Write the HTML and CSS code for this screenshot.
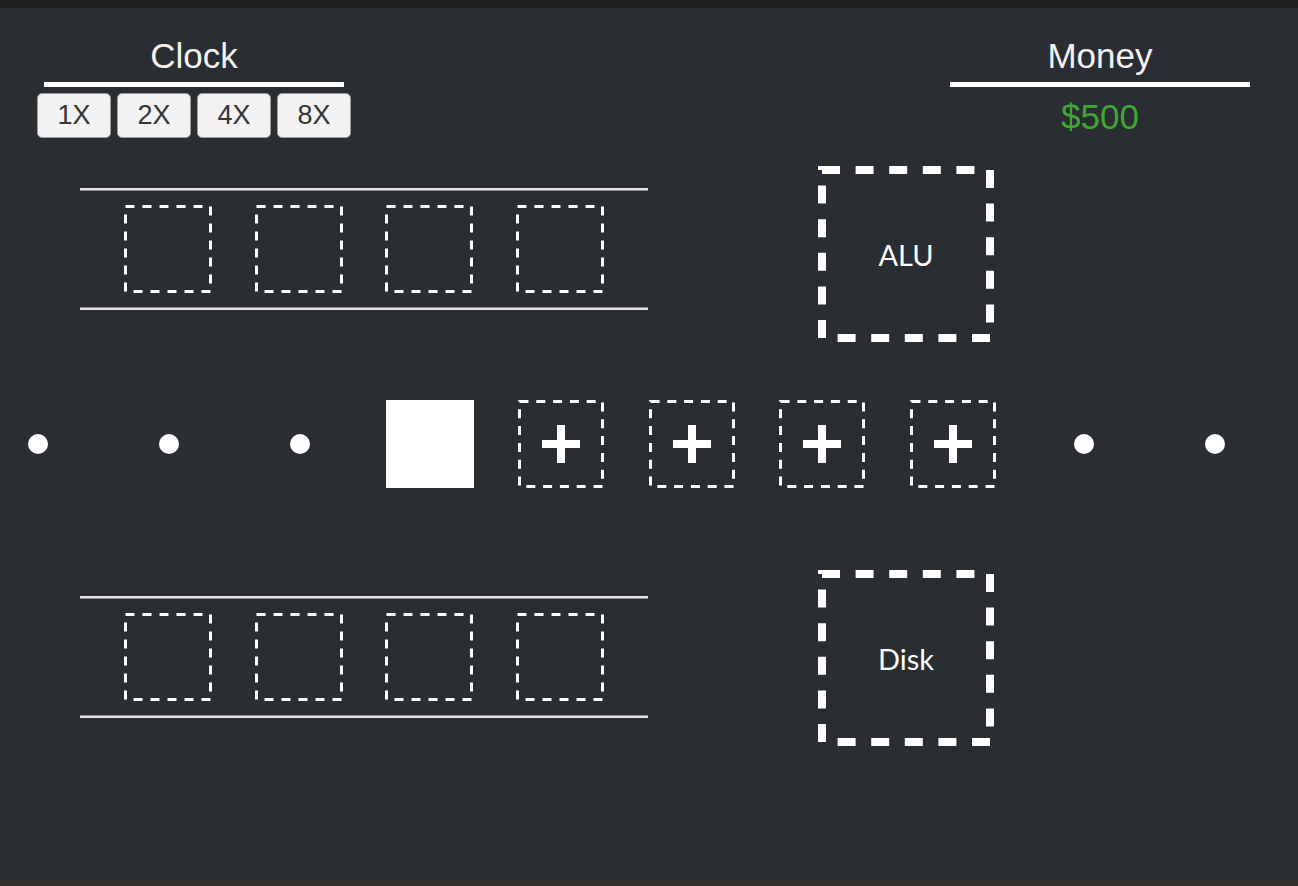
FILE: index.html
```html
<!DOCTYPE html>
<html>
<head>
<meta charset="utf-8">
<link rel="stylesheet" href="styles.css">
</head>
<body>
<div class="topbar"></div>
<div class="page">
  <header class="header">
    <section class="clock">
      <div class="title">Clock</div>
      <div class="rule"></div>
      <div class="speeds">
        <button class="speed">1X</button>
        <button class="speed">2X</button>
        <button class="speed">4X</button>
        <button class="speed">8X</button>
      </div>
    </section>
    <section class="money">
      <div class="title">Money</div>
      <div class="rule"></div>
      <div class="amount">$500</div>
    </section>
  </header>

  <main class="board">
    <div class="unit-row upper">
      <div class="track">
        <svg class="slot" width="88" height="88" viewBox="0 0 88 88"><rect x="1.5" y="1.5" width="85" height="85" fill="none" stroke="#fff" stroke-width="3" stroke-dasharray="9 8"/></svg>
        <svg class="slot" width="88" height="88" viewBox="0 0 88 88"><rect x="1.5" y="1.5" width="85" height="85" fill="none" stroke="#fff" stroke-width="3" stroke-dasharray="9 8"/></svg>
        <svg class="slot" width="88" height="88" viewBox="0 0 88 88"><rect x="1.5" y="1.5" width="85" height="85" fill="none" stroke="#fff" stroke-width="3" stroke-dasharray="9 8"/></svg>
        <svg class="slot" width="88" height="88" viewBox="0 0 88 88"><rect x="1.5" y="1.5" width="85" height="85" fill="none" stroke="#fff" stroke-width="3" stroke-dasharray="9 8"/></svg>
      </div>
      <div class="device">
        <svg class="frame" width="176" height="176" viewBox="0 0 176 176"><rect x="4" y="4" width="168" height="168" fill="none" stroke="#fff" stroke-width="8" stroke-dasharray="18 15.6"/></svg>
        <span class="label">ALU</span>
      </div>
    </div>

    <div class="pipeline">
      <div class="cell"><span class="dot"></span></div>
      <div class="cell"><span class="dot"></span></div>
      <div class="cell"><span class="dot"></span></div>
      <div class="cell"><span class="block"></span></div>
      <div class="cell"><svg class="add" width="86" height="88" viewBox="0 0 86 88"><rect x="1.5" y="1.5" width="83" height="85" fill="none" stroke="#fff" stroke-width="3" stroke-dasharray="9 7.8"/><rect x="24" y="40" width="38" height="8" fill="#fff"/><rect x="39" y="25" width="8" height="38" fill="#fff"/></svg></div>
      <div class="cell"><svg class="add" width="86" height="88" viewBox="0 0 86 88"><rect x="1.5" y="1.5" width="83" height="85" fill="none" stroke="#fff" stroke-width="3" stroke-dasharray="9 7.8"/><rect x="24" y="40" width="38" height="8" fill="#fff"/><rect x="39" y="25" width="8" height="38" fill="#fff"/></svg></div>
      <div class="cell"><svg class="add" width="86" height="88" viewBox="0 0 86 88"><rect x="1.5" y="1.5" width="83" height="85" fill="none" stroke="#fff" stroke-width="3" stroke-dasharray="9 7.8"/><rect x="24" y="40" width="38" height="8" fill="#fff"/><rect x="39" y="25" width="8" height="38" fill="#fff"/></svg></div>
      <div class="cell"><svg class="add" width="86" height="88" viewBox="0 0 86 88"><rect x="1.5" y="1.5" width="83" height="85" fill="none" stroke="#fff" stroke-width="3" stroke-dasharray="9 7.8"/><rect x="24" y="40" width="38" height="8" fill="#fff"/><rect x="39" y="25" width="8" height="38" fill="#fff"/></svg></div>
      <div class="cell"><span class="dot"></span></div>
      <div class="cell"><span class="dot"></span></div>
    </div>

    <div class="unit-row lower">
      <div class="track">
        <svg class="slot" width="88" height="88" viewBox="0 0 88 88"><rect x="1.5" y="1.5" width="85" height="85" fill="none" stroke="#fff" stroke-width="3" stroke-dasharray="9 8"/></svg>
        <svg class="slot" width="88" height="88" viewBox="0 0 88 88"><rect x="1.5" y="1.5" width="85" height="85" fill="none" stroke="#fff" stroke-width="3" stroke-dasharray="9 8"/></svg>
        <svg class="slot" width="88" height="88" viewBox="0 0 88 88"><rect x="1.5" y="1.5" width="85" height="85" fill="none" stroke="#fff" stroke-width="3" stroke-dasharray="9 8"/></svg>
        <svg class="slot" width="88" height="88" viewBox="0 0 88 88"><rect x="1.5" y="1.5" width="85" height="85" fill="none" stroke="#fff" stroke-width="3" stroke-dasharray="9 8"/></svg>
      </div>
      <div class="device">
        <svg class="frame" width="176" height="176" viewBox="0 0 176 176"><rect x="4" y="4" width="168" height="168" fill="none" stroke="#fff" stroke-width="8" stroke-dasharray="18 15.6"/></svg>
        <span class="label">Disk</span>
      </div>
    </div>
  </main>
  <div class="footer"></div>
</div>
</body>
</html>
```

FILE: styles.css
```css
* { box-sizing: border-box; }

html, body {
  margin: 0;
  padding: 0;
  background: #2a2d32;
  overflow: hidden;
}

body {
  height: 886px;
  display: flex;
  flex-direction: column;
  font-family: "Liberation Sans", Arial, sans-serif;
  color: #fff;
}

.topbar {
  height: 8px;
  background: #1f2022;
  flex: none;
}

.page {
  flex: 1;
  display: flex;
  flex-direction: column;
}

.header {
  display: flex;
  justify-content: space-between;
  align-items: flex-start;
  padding: 28px 48px 0 37px;
}

.clock {
  width: 314px;
  display: flex;
  flex-direction: column;
  align-items: center;
}

.money {
  width: 300px;
  display: flex;
  flex-direction: column;
  align-items: center;
}

.title {
  font-size: 35px;
  line-height: 40px;
  height: 40px;
  color: #f2f2f2;
}

.rule {
  width: 300px;
  height: 5px;
  background: #fff;
  margin-top: 6px;
}

.speeds {
  display: flex;
  gap: 6px;
  margin-top: 6px;
}

.speed {
  width: 74px;
  height: 45px;
  padding: 0;
  border: 1px solid #9a9a9a;
  border-radius: 5px;
  background: #f2f2f2;
  color: #353535;
  font-family: "Liberation Sans", Arial, sans-serif;
  font-size: 27px;
  line-height: 43px;
}

.amount {
  margin-top: 10px;
  font-size: 35px;
  line-height: 40px;
  color: #3ea832;
}

.board {
  flex: 1;
  display: flex;
  flex-direction: column;
  padding-top: 28px;
}

.unit-row {
  display: flex;
  align-items: flex-start;
  padding-left: 80px;
}

.track {
  width: 568px;
  height: 122px;
  display: flex;
  justify-content: space-between;
  align-items: center;
  padding: 0 44px;
  border-top: 2px solid #e4e4e4;
  border-bottom: 2px solid #e4e4e4;
  box-shadow: inset 0 1px 0 #8f8f8f, inset 0 -1px 0 #8f8f8f;
}

.upper .track { margin-top: 22px; }
.lower .track { margin-top: 26px; }

.slot { display: block; }

.device {
  width: 176px;
  height: 176px;
  margin-left: 170px;
  display: grid;
  place-items: center;
}

.device > * { grid-area: 1 / 1; }

.frame { display: block; }

.label {
  font-family: Lato, "Open Sans", sans-serif;
  font-size: 29px;
  color: #fff;
}

.pipeline {
  display: grid;
  grid-template-columns: repeat(10, 130.7px);
  margin: 58px 0 82px -27px;
  height: 88px;
  align-items: center;
  justify-items: center;
}

.cell {
  display: flex;
  align-items: center;
  justify-content: center;
}

.dot {
  width: 20px;
  height: 20px;
  border-radius: 50%;
  background: #fff;
}

.block {
  width: 88px;
  height: 88px;
  background: #fff;
}

.add { display: block; }

.footer {
  height: 5px;
  background: #332f2d;
  margin-top: auto;
  flex: none;
}
```
